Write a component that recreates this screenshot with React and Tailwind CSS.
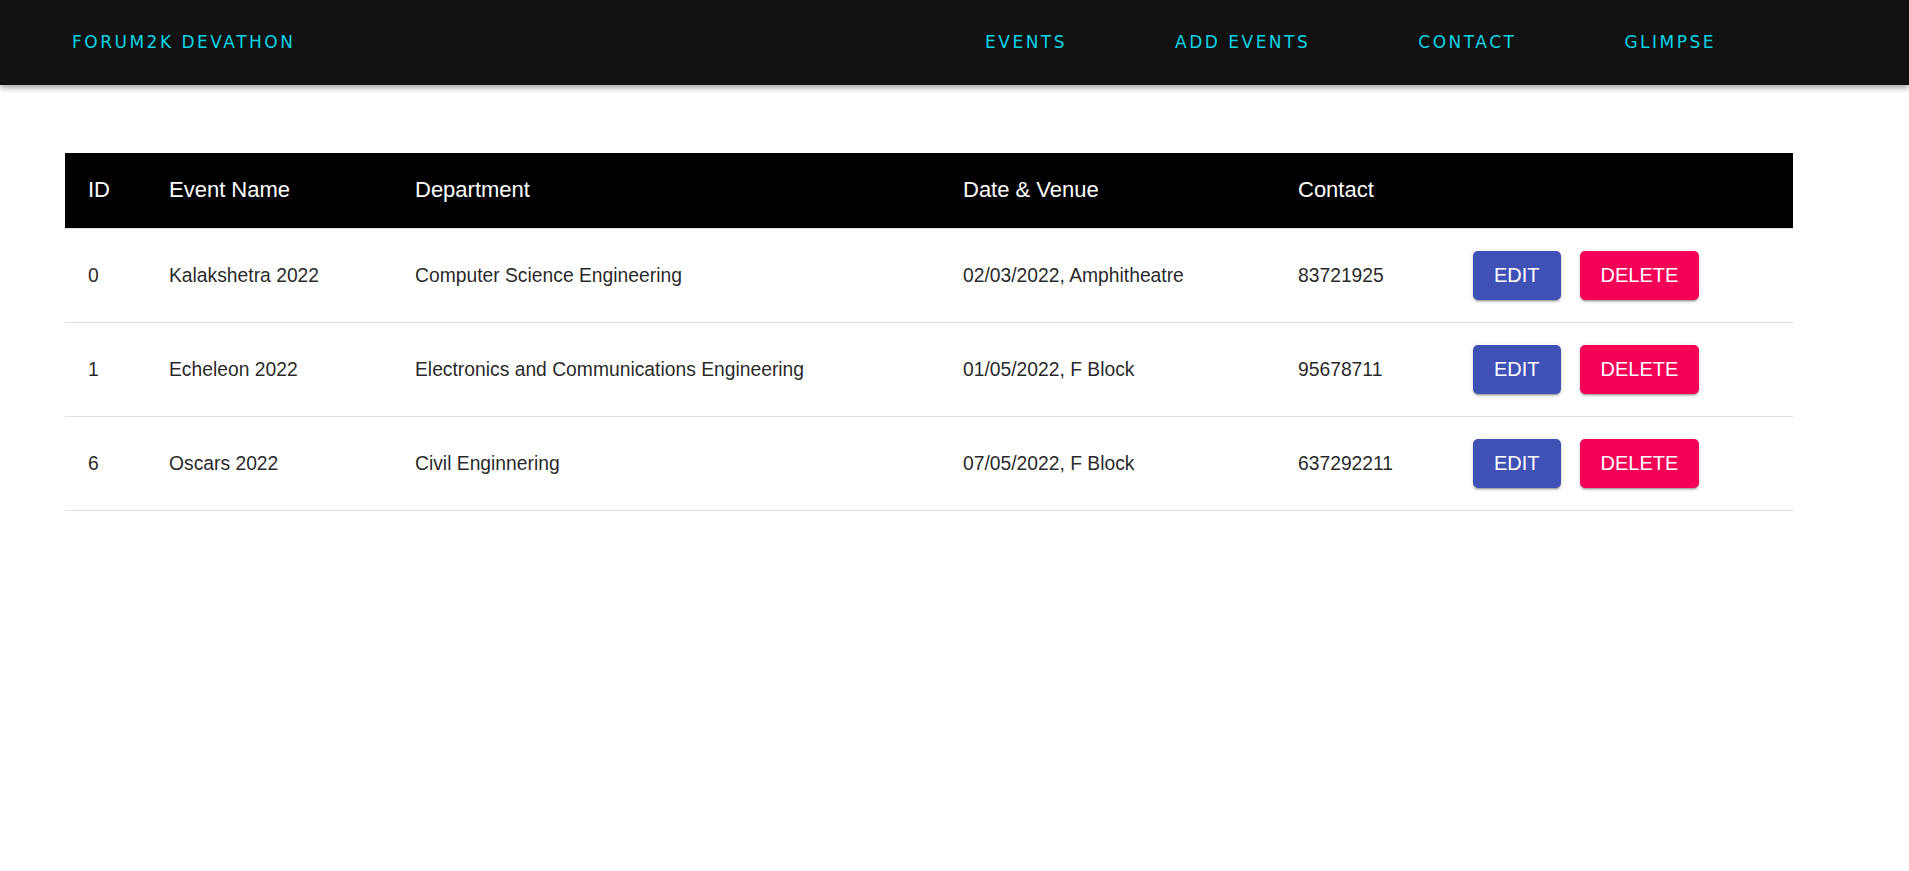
import React from 'react';

const links = ['EVENTS', 'ADD EVENTS', 'CONTACT', 'GLIMPSE'];

const events = [
    { id: 0, name: 'Kalakshetra 2022', dept: 'Computer Science Engineering', venue: '02/03/2022, Amphitheatre', contact: '83721925' },
    { id: 1, name: 'Echeleon 2022', dept: 'Electronics and Communications Engineering', venue: '01/05/2022, F Block', contact: '95678711' },
    { id: 6, name: 'Oscars 2022', dept: 'Civil Enginnering', venue: '07/05/2022, F Block', contact: '637292211' },
];

const App = () => {
    return (
        <div className="min-h-screen bg-white">
            {/* Navbar */}
            <nav className="h-[85px] bg-[#111111] flex items-center pl-[72px] pr-[193px] shadow-[0_3px_6px_rgba(0,0,0,0.35)] text-[#08d4e4] font-['DejaVu_Sans',sans-serif] text-[17px] tracking-[2.5px]">
                <span>FORUM2K DEVATHON</span>
                <div className="ml-auto flex gap-[108px]">
                    {links.map((l) => (
                        <a key={l} href="#" className="block">{l}</a>
                    ))}
                </div>
            </nav>

            {/* Events table */}
            <div className="pt-[68px] pl-[65px]">
                <table className="w-[1728px] table-fixed border-collapse font-['Liberation_Sans',Arial,sans-serif]">
                    <thead>
                        <tr className="bg-black text-white text-[22px] text-left">
                            <th className="w-[81px] h-[75px] pl-[23px] pb-[2px] font-normal border-b border-[#e0e0e0]">ID</th>
                            <th className="w-[246px] pl-[23px] pb-[2px] font-normal border-b border-[#e0e0e0]">Event Name</th>
                            <th className="w-[548px] pl-[23px] pb-[2px] font-normal border-b border-[#e0e0e0]">Department</th>
                            <th className="w-[335px] pl-[23px] pb-[2px] font-normal border-b border-[#e0e0e0]">Date &amp; Venue</th>
                            <th className="w-[175px] pl-[23px] pb-[2px] font-normal border-b border-[#e0e0e0]">Contact</th>
                            <th className="w-[343px] pl-[23px] pb-[2px] font-normal border-b border-[#e0e0e0]"></th>
                        </tr>
                    </thead>
                    <tbody className="text-[19.3px] text-[rgba(0,0,0,0.87)]">
                        {events.map((ev) => (
                            <tr key={ev.id} className="border-b border-[#e0e0e0]">
                                <td className="h-[94px] pl-[23px] pt-[3px]">{ev.id}</td>
                                <td className="pl-[23px] pt-[3px]">{ev.name}</td>
                                <td className="pl-[23px] pt-[3px]">{ev.dept}</td>
                                <td className="pl-[23px] pt-[3px]">{ev.venue}</td>
                                <td className="pl-[23px] pt-[3px]">{ev.contact}</td>
                                <td className="pl-[23px]">
                                    <div className="flex gap-[19px] text-[20px] text-white">
                                        <button className="h-[49px] px-[21px] rounded-[5px] bg-[#3f51b5] shadow-[0_3px_1px_-2px_rgba(0,0,0,0.2),0_2px_2px_0_rgba(0,0,0,0.14),0_1px_5px_0_rgba(0,0,0,0.12)]">EDIT</button>
                                        <button className="h-[49px] px-[21px] rounded-[5px] bg-[#f50057] shadow-[0_3px_1px_-2px_rgba(0,0,0,0.2),0_2px_2px_0_rgba(0,0,0,0.14),0_1px_5px_0_rgba(0,0,0,0.12)]">DELETE</button>
                                    </div>
                                </td>
                            </tr>
                        ))}
                    </tbody>
                </table>
            </div>
        </div>
    );
};

export default App;
